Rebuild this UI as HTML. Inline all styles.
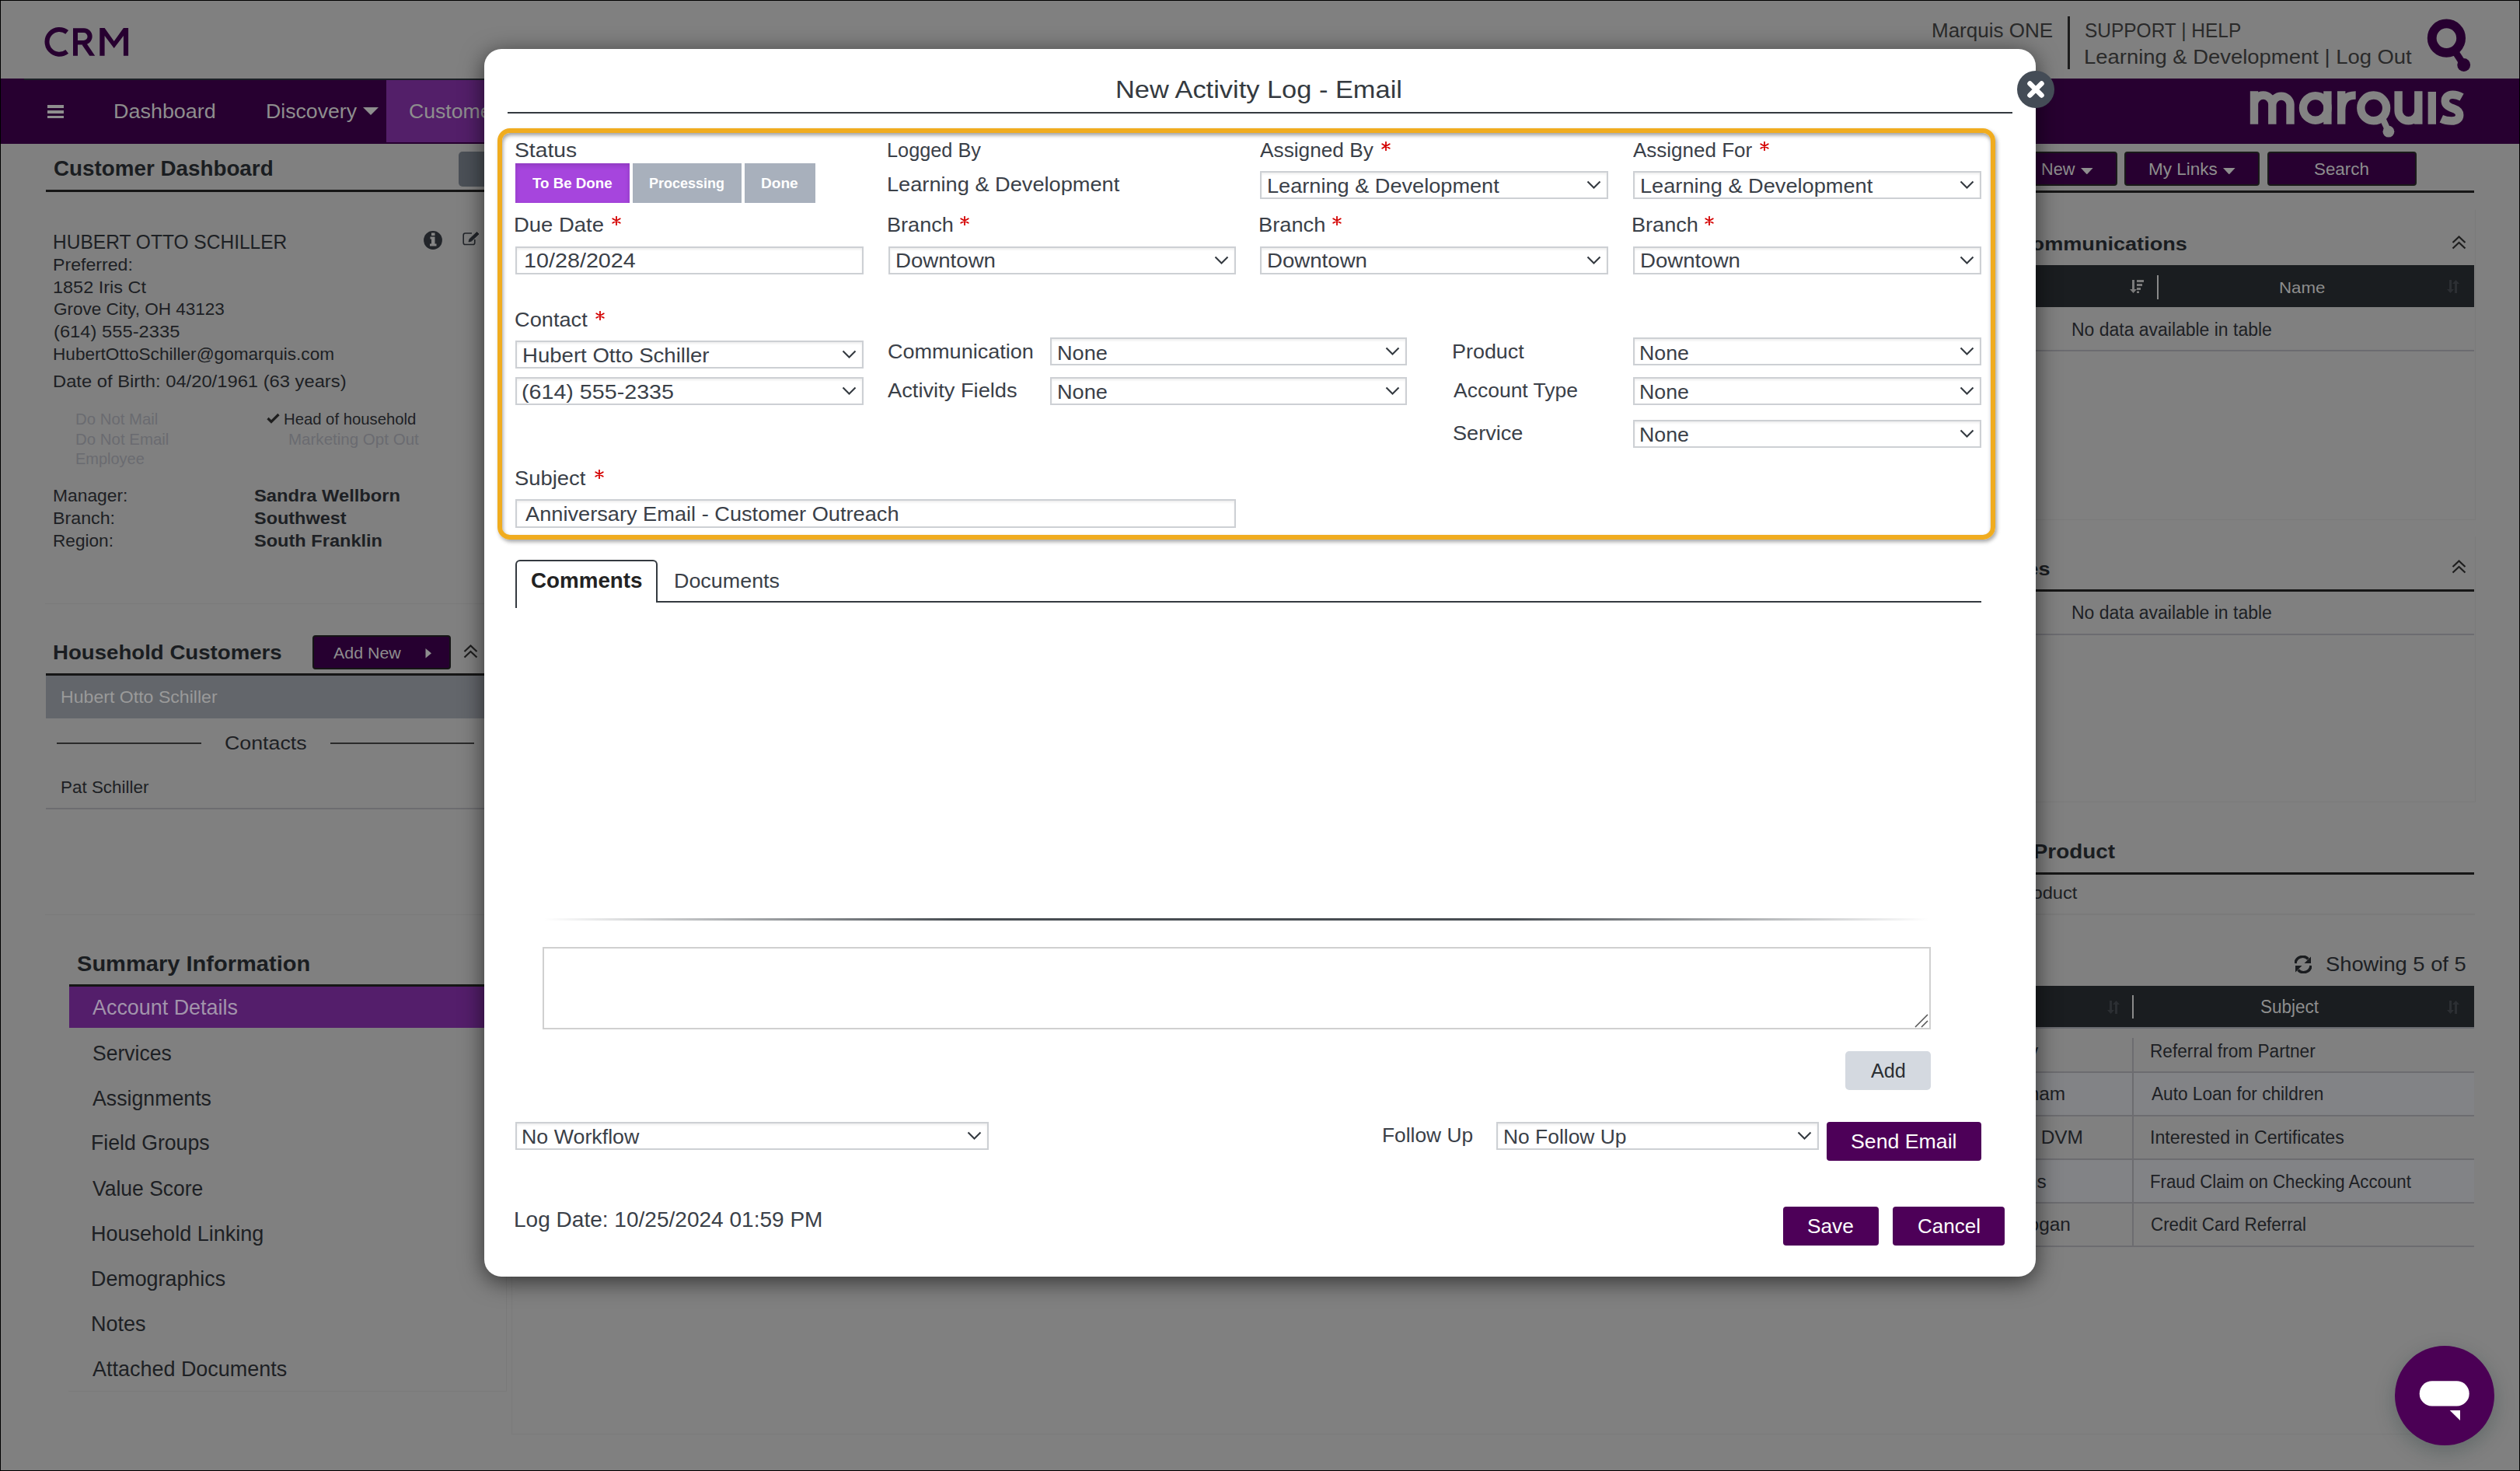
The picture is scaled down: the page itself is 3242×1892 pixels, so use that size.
<!DOCTYPE html>
<html><head><meta charset="utf-8"><style>
html,body{margin:0;padding:0;width:3242px;height:1892px;overflow:hidden;background:#808080;font-family:"Liberation Sans",sans-serif}
.t{position:absolute;white-space:nowrap;line-height:1;transform-origin:0 0}
#frame{position:absolute;left:0;top:0;width:3242px;height:1892px;box-sizing:border-box;border:1px solid #000;z-index:100;pointer-events:none}
</style></head><body>
<div style="position:absolute;left:0px;top:0px;width:3242px;height:101px;background:#808080"></div>
<div style="position:absolute;left:0px;top:101px;width:3242px;height:84px;background:#270030"></div>
<div style="position:absolute;left:31px;top:101px;width:2589px;height:2px;background:#1c2126"></div>
<div style="position:absolute;left:497px;top:103px;width:203px;height:80px;background:#531f69"></div>
<div style="position:absolute;left:61px;top:135px;width:21px;height:3.5px;background:#8e8e8e"></div>
<div style="position:absolute;left:61px;top:142px;width:21px;height:3.5px;background:#8e8e8e"></div>
<div style="position:absolute;left:61px;top:148.5px;width:21px;height:3.5px;background:#8e8e8e"></div>
<div style="position:absolute;left:58px;top:185px;width:582px;height:591px;background:#808080;border-bottom:1px solid #7a7a7a"></div>
<div style="position:absolute;left:59px;top:244px;width:581px;height:3px;background:#161616"></div>
<div style="position:absolute;left:590px;top:195px;width:70px;height:45px;background:#4b5057;border-radius:5px"></div>
<div style="position:absolute;left:58px;top:790px;width:582px;height:386px;background:#808080;border-bottom:1px solid #7a7a7a"></div>
<div style="position:absolute;left:402px;top:817px;width:178px;height:44px;background:#260030;border:2px solid #151515;border-radius:4px;box-sizing:border-box"></div>
<div style="position:absolute;left:59px;top:866px;width:581px;height:3px;background:#161616"></div>
<div style="position:absolute;left:59px;top:869px;width:581px;height:55px;background:#63666b"></div>
<div style="position:absolute;left:73px;top:955px;width:186px;height:2px;background:#2a2a2a"></div>
<div style="position:absolute;left:425px;top:955px;width:185px;height:2px;background:#2a2a2a"></div>
<div style="position:absolute;left:59px;top:1039px;width:581px;height:2px;background:#6d6d70"></div>
<div style="position:absolute;left:88px;top:1195px;width:563px;height:594px;background:#808080;border-right:1px solid #7a7a7a;border-bottom:1px solid #7a7a7a"></div>
<div style="position:absolute;left:89px;top:1266px;width:551px;height:3px;background:#161616"></div>
<div style="position:absolute;left:89px;top:1269px;width:551px;height:53px;background:#541e6b"></div>
<div style="position:absolute;left:658px;top:1190px;width:2526px;height:654px;background:#808080;border-left:1px solid #7a7a7a;border-bottom:1px solid #7a7a7a"></div>
<div style="position:absolute;left:2600px;top:195px;width:124px;height:44px;background:#270030;border:2px solid #1a1a1a;border-radius:4px;box-sizing:border-box"></div>
<div style="position:absolute;left:2733px;top:195px;width:174px;height:44px;background:#270030;border:2px solid #1a1a1a;border-radius:4px;box-sizing:border-box"></div>
<div style="position:absolute;left:2917px;top:195px;width:192px;height:44px;background:#270030;border:2px solid #1a1a1a;border-radius:4px;box-sizing:border-box"></div>
<div style="position:absolute;left:2600px;top:245px;width:583px;height:3px;background:#161616"></div>
<div style="position:absolute;left:2600px;top:270px;width:584px;height:398px;background:#808080;border-bottom:1px solid #7a7a7a;border-right:1px solid #7a7a7a"></div>
<div style="position:absolute;left:2600px;top:341px;width:583px;height:54px;background:#1a1d20"></div>
<div style="position:absolute;left:2775px;top:354px;width:2px;height:31px;background:#8a8a8a"></div>
<div style="position:absolute;left:2600px;top:450px;width:583px;height:2px;background:#6c6c70"></div>
<div style="position:absolute;left:2600px;top:690px;width:584px;height:341px;background:#808080;border-bottom:1px solid #7a7a7a;border-right:1px solid #7a7a7a"></div>
<div style="position:absolute;left:2600px;top:758px;width:583px;height:3px;background:#161616"></div>
<div style="position:absolute;left:2600px;top:815px;width:583px;height:2px;background:#6c6c70"></div>
<div style="position:absolute;left:2600px;top:1122px;width:583px;height:3px;background:#161616"></div>
<div style="position:absolute;left:2600px;top:1175px;width:584px;height:2px;background:#7a7a7a"></div>
<div style="position:absolute;left:2600px;top:1268px;width:583px;height:53px;background:#1a1d20"></div>
<div style="position:absolute;left:2743px;top:1280px;width:2px;height:30px;background:#8a8a8a"></div>
<div style="position:absolute;left:2600px;top:1323px;width:583px;height:55px;background:#808080"></div>
<div style="position:absolute;left:2600px;top:1378px;width:583px;height:56px;background:#828386"></div>
<div style="position:absolute;left:2600px;top:1434px;width:583px;height:56px;background:#808080"></div>
<div style="position:absolute;left:2600px;top:1490px;width:583px;height:56px;background:#828386"></div>
<div style="position:absolute;left:2600px;top:1546px;width:583px;height:56px;background:#808080"></div>
<div style="position:absolute;left:2600px;top:1321px;width:583px;height:2px;background:#6a6b70"></div>
<div style="position:absolute;left:2600px;top:1378px;width:583px;height:2px;background:#6c6c70"></div>
<div style="position:absolute;left:2600px;top:1434px;width:583px;height:2px;background:#6c6c70"></div>
<div style="position:absolute;left:2600px;top:1490px;width:583px;height:2px;background:#6c6c70"></div>
<div style="position:absolute;left:2600px;top:1546px;width:583px;height:2px;background:#6c6c70"></div>
<div style="position:absolute;left:2600px;top:1602px;width:583px;height:2px;background:#6c6c70"></div>
<div style="position:absolute;left:2743px;top:1335px;width:2px;height:269px;background:#6c6c70"></div>
<div style="position:absolute;left:2660px;top:21px;width:3px;height:68px;background:#1c1c1c"></div>
<svg style="position:absolute;left:2880px;top:100px" width="300" height="90" viewBox="0 0 300 90" fill="none" stroke="#838383" stroke-width="10.4">
<path d="M20 59.8 V17.3 M20 34.2 A11.65 11.65 0 0 1 43.3 34.2 V59.8 M43.3 34.2 A11.65 11.65 0 0 1 66.5 34.2 V59.8"/>
<circle cx="98.8" cy="38.9" r="15.8"/><path d="M114.4 17.3 V59.8"/>
<path d="M132.2 59.8 V17.3 M132.2 42 Q132.2 22.5 150.7 22.5"/>
<circle cx="173.7" cy="38.9" r="16.4"/><path d="M185 52 L192.9 69.2" stroke-width="8"/><circle cx="192.9" cy="69.2" r="7.4" fill="#838383" stroke="none"/>
<path d="M205.6 17.3 V42.4 A12.85 12.85 0 0 0 231.3 42.4 M231.3 17.3 V59.8"/>
<path d="M248.8 18 V59.8"/>
<path d="M287.1 25 C282 22.2 279 21.8 275.5 21.8 C269 21.8 265.8 25.5 265.8 30 C265.8 35 270 37.5 276 39.5 C282 41.5 284.2 44 284.2 48 C284.2 53 280 55.5 274 55.5 C269 55.5 264.5 54.5 260.8 52.8" stroke-width="10.5"/>
</svg>
<svg style="position:absolute;left:3110px;top:15px" width="80" height="85" viewBox="0 0 80 85">
<circle cx="37.4" cy="34.1" r="18.7" fill="none" stroke="#270030" stroke-width="11.8"/><path d="M47 49 L59.7 68.5" stroke="#270030" stroke-width="9"/><circle cx="59.7" cy="68.5" r="8.4" fill="#270030"/></svg>
<svg style="position:absolute;left:40px;top:20px" width="140" height="60" viewBox="0 0 140 60">
<path d="M46.2 21.3 A15.9 15.9 0 1 0 46.2 46.3" fill="none" stroke="#270030" stroke-width="6"/>
<path fill-rule="evenodd" fill="#270030" d="M54 51.7 V16.2 H68 A10.65 10.65 0 0 1 68 37.5 H60 V51.7 Z M60 21.9 V32 H67.5 A5.05 5.05 0 0 0 67.5 21.9 Z"/>
<path fill="#270030" d="M65.4 37.5 L71.5 36 L82.2 51.7 L75.2 51.7 Z"/>
<path fill="#270030" d="M88.3 51.7 L88.3 15.9 L94.6 15.9 L106.7 33 L118.9 15.9 L125.1 15.9 L125.1 51.7 L118.9 51.7 L118.9 26 L106.7 42 L94.6 26 L94.6 51.7 Z"/></svg>
<svg style="position:absolute;left:545px;top:296.5px" width="24" height="24" viewBox="0 0 24 24"><circle cx="12" cy="12" r="11.9" fill="#22252a"/><rect x="10" y="2.5" width="4.5" height="3.5" fill="#858585"/><path d="M8.5 7.5 H14.5 V16.5 H16.5 V19.5 H8 V16.5 H10 V10.5 H8.5 Z" fill="#858585"/></svg>
<svg style="position:absolute;left:594px;top:297px" width="24" height="20" viewBox="0 0 24 20" fill="none" stroke="#22252a" stroke-width="1.6"><path d="M13 3 H4.5 Q2.2 3 2.2 5.3 V15.2 Q2.2 17.5 4.5 17.5 H14.5 Q16.8 17.5 16.8 15.2 V11"/><path d="M9 14 L10 10.5 L19.5 1.5 L22 4 L12.5 13 Z" fill="#22252a" stroke-width="1"/></svg>
<svg style="position:absolute;left:343px;top:531px" width="17" height="14" viewBox="0 0 17 14"><path d="M1.5 7 L6 11.5 L15.5 2" fill="none" stroke="#1e1e1e" stroke-width="3.2"/></svg>
<svg style="position:absolute;left:547px;top:834px" width="9" height="13" viewBox="0 0 9 13"><path d="M0.5 0 L8 6.3 L0.5 12.5 Z" fill="#8e8e8e"/></svg>
<svg style="position:absolute;left:596px;top:829px" width="19" height="18" viewBox="0 0 19 18" fill="none" stroke="#1e1e1e" stroke-width="2.2"><path d="M1.5 9 L9.5 1.5 L17.5 9 M1.5 16.5 L9.5 9 L17.5 16.5"/></svg>
<svg style="position:absolute;left:3153.5px;top:303px" width="19" height="18" viewBox="0 0 19 18" fill="none" stroke="#1e1e1e" stroke-width="2.2"><path d="M1.5 9 L9.5 1.5 L17.5 9 M1.5 16.5 L9.5 9 L17.5 16.5"/></svg>
<svg style="position:absolute;left:3153.5px;top:720px" width="19" height="18" viewBox="0 0 19 18" fill="none" stroke="#1e1e1e" stroke-width="2.2"><path d="M1.5 9 L9.5 1.5 L17.5 9 M1.5 16.5 L9.5 9 L17.5 16.5"/></svg>
<svg style="position:absolute;left:467px;top:138px" width="20" height="10" viewBox="0 0 20 10"><path d="M0 0 L20 0 L10.0 10 Z" fill="#8e8e8e"/></svg>
<svg style="position:absolute;left:2677px;top:215.6px" width="15.6" height="8.4" viewBox="0 0 15.6 8.4"><path d="M0 0 L15.6 0 L7.8 8.4 Z" fill="#8e8e8e"/></svg>
<svg style="position:absolute;left:2860px;top:215.6px" width="15.6" height="8.4" viewBox="0 0 15.6 8.4"><path d="M0 0 L15.6 0 L7.8 8.4 Z" fill="#8e8e8e"/></svg>
<svg style="position:absolute;left:2740px;top:360px" width="19" height="18" viewBox="0 0 19 18" fill="#7a7a7a"><path d="M3 0 H6 V12 H9 L4.5 17 L0 12 H3 Z"/><rect x="9" y="0" width="9" height="3"/><rect x="9" y="5" width="7" height="3"/><rect x="9" y="10" width="5" height="3"/><rect x="9" y="14.5" width="3" height="2.5"/></svg>
<svg style="position:absolute;left:3147.5px;top:360px" width="16" height="18" viewBox="0 0 16 18" fill="#2c2f33"><path d="M3 0 H6 V12 H9 L4.5 17 L0 12 H3 Z"/><path d="M10 17 H13 V5 H16 L11.5 0 L7 5 H10 Z"/></svg>
<svg style="position:absolute;left:2710.5px;top:1287px" width="16" height="18" viewBox="0 0 16 18" fill="#2c2f33"><path d="M3 0 H6 V12 H9 L4.5 17 L0 12 H3 Z"/><path d="M10 17 H13 V5 H16 L11.5 0 L7 5 H10 Z"/></svg>
<svg style="position:absolute;left:3147.5px;top:1287px" width="16" height="18" viewBox="0 0 16 18" fill="#2c2f33"><path d="M3 0 H6 V12 H9 L4.5 17 L0 12 H3 Z"/><path d="M10 17 H13 V5 H16 L11.5 0 L7 5 H10 Z"/></svg>
<svg style="position:absolute;left:2952px;top:1229px" width="22" height="23" viewBox="0 0 22 23" fill="#1a1c1f"><path d="M1 10 A9.5 9.5 0 0 1 17.5 4.5" fill="none" stroke="#1a1c1f" stroke-width="3.4"/><path d="M21 1.5 V10 H12.5 Z"/><path d="M21 13 A9.5 9.5 0 0 1 4.5 18.5" fill="none" stroke="#1a1c1f" stroke-width="3.4"/><path d="M1 21.5 V13 H9.5 Z"/></svg>
<div class="t" style="left:145.9px;top:130.9px;font-size:25.35px;color:#8e8e8e;font-weight:normal;transform:scaleX(1.063);">Dashboard</div>
<div class="t" style="left:341.9px;top:130.9px;font-size:25.35px;color:#8e8e8e;font-weight:normal;transform:scaleX(1.052);">Discovery</div>
<div class="t" style="left:525.7px;top:130.9px;font-size:25.35px;color:#8e8e8e;font-weight:normal;transform:scaleX(1.050);">Customer</div>
<div class="t" style="left:69.1px;top:203.7px;font-size:26.76px;color:#1a1d21;font-weight:bold;transform:scaleX(1.039);">Customer Dashboard</div>
<div class="t" style="left:68.1px;top:297.6px;font-size:26.34px;color:#1d2024;font-weight:normal;transform:scaleX(0.932);">HUBERT OTTO SCHILLER</div>
<div class="t" style="left:68.2px;top:330.3px;font-size:22.54px;color:#1d2024;font-weight:normal;transform:scaleX(1.027);">Preferred:</div>
<div class="t" style="left:68.2px;top:359.3px;font-size:22.54px;color:#1d2024;font-weight:normal;transform:scaleX(1.041);">1852 Iris Ct</div>
<div class="t" style="left:68.9px;top:387.3px;font-size:22.54px;color:#1d2024;font-weight:normal;transform:scaleX(1.000);">Grove City, OH 43123</div>
<div class="t" style="left:68.6px;top:416.3px;font-size:22.54px;color:#1d2024;font-weight:normal;transform:scaleX(1.054);">(614) 555-2335</div>
<div class="t" style="left:68.2px;top:445.3px;font-size:22.54px;color:#1d2024;font-weight:normal;transform:scaleX(1.003);">HubertOttoSchiller@gomarquis.com</div>
<div class="t" style="left:68.1px;top:480.3px;font-size:22.54px;color:#1d2024;font-weight:normal;transform:scaleX(1.054);">Date of Birth: 04/20/1961 (63 years)</div>
<div class="t" style="left:97.0px;top:528.4px;font-size:21.13px;color:#6a6b70;font-weight:normal;transform:scaleX(0.964);">Do Not Mail</div>
<div class="t" style="left:97.0px;top:553.9px;font-size:21.13px;color:#6a6b70;font-weight:normal;transform:scaleX(0.967);">Do Not Email</div>
<div class="t" style="left:97.0px;top:579.4px;font-size:21.13px;color:#6a6b70;font-weight:normal;transform:scaleX(0.945);">Employee</div>
<div class="t" style="left:365.1px;top:528.4px;font-size:21.13px;color:#1d2024;font-weight:normal;transform:scaleX(0.960);">Head of household</div>
<div class="t" style="left:370.9px;top:553.9px;font-size:21.13px;color:#6a6b70;font-weight:normal;transform:scaleX(0.972);">Marketing Opt Out</div>
<div class="t" style="left:68.1px;top:627.3px;font-size:21.97px;color:#1d2024;font-weight:normal;transform:scaleX(1.039);">Manager:</div>
<div class="t" style="left:68.1px;top:655.7px;font-size:21.97px;color:#1d2024;font-weight:normal;transform:scaleX(1.057);">Branch:</div>
<div class="t" style="left:68.1px;top:684.5px;font-size:21.97px;color:#1d2024;font-weight:normal;transform:scaleX(1.029);">Region:</div>
<div class="t" style="left:327.4px;top:627.3px;font-size:21.97px;color:#1d2024;font-weight:bold;transform:scaleX(1.080);">Sandra Wellborn</div>
<div class="t" style="left:327.4px;top:655.7px;font-size:21.97px;color:#1d2024;font-weight:bold;transform:scaleX(1.067);">Southwest</div>
<div class="t" style="left:327.4px;top:684.5px;font-size:21.97px;color:#1d2024;font-weight:bold;transform:scaleX(1.073);">South Franklin</div>
<div class="t" style="left:68.3px;top:826.9px;font-size:25.35px;color:#1a1d21;font-weight:bold;transform:scaleX(1.090);">Household Customers</div>
<div class="t" style="left:429.0px;top:829.5px;font-size:20.70px;color:#8e8e8e;font-weight:normal;transform:scaleX(1.034);">Add New</div>
<div class="t" style="left:77.7px;top:886.4px;font-size:21.97px;color:#9a9a9a;font-weight:normal;transform:scaleX(1.052);">Hubert Otto Schiller</div>
<div class="t" style="left:289.3px;top:943.5px;font-size:24.65px;color:#1d2024;font-weight:normal;transform:scaleX(1.086);">Contacts</div>
<div class="t" style="left:77.9px;top:1001.8px;font-size:21.83px;color:#1d2024;font-weight:normal;transform:scaleX(1.027);">Pat Schiller</div>
<div class="t" style="left:98.5px;top:1227.2px;font-size:26.76px;color:#1a1d21;font-weight:bold;transform:scaleX(1.086);">Summary Information</div>
<div class="t" style="left:119.3px;top:1282.1px;font-size:27.46px;color:#a294ab;font-weight:normal;transform:scaleX(0.980);">Account Details</div>
<div class="t" style="left:118.5px;top:1341.1px;font-size:27.46px;color:#1d2024;font-weight:normal;transform:scaleX(0.967);">Services</div>
<div class="t" style="left:119.3px;top:1399.1px;font-size:27.46px;color:#1d2024;font-weight:normal;transform:scaleX(0.973);">Assignments</div>
<div class="t" style="left:117.2px;top:1456.1px;font-size:27.46px;color:#1d2024;font-weight:normal;transform:scaleX(0.971);">Field Groups</div>
<div class="t" style="left:119.3px;top:1515.1px;font-size:27.46px;color:#1d2024;font-weight:normal;transform:scaleX(0.965);">Value Score</div>
<div class="t" style="left:117.2px;top:1573.1px;font-size:27.46px;color:#1d2024;font-weight:normal;transform:scaleX(0.984);">Household Linking</div>
<div class="t" style="left:117.2px;top:1631.1px;font-size:27.46px;color:#1d2024;font-weight:normal;transform:scaleX(0.978);">Demographics</div>
<div class="t" style="left:117.2px;top:1688.7px;font-size:27.46px;color:#1d2024;font-weight:normal;transform:scaleX(0.985);">Notes</div>
<div class="t" style="left:119.3px;top:1747.1px;font-size:27.46px;color:#1d2024;font-weight:normal;transform:scaleX(0.982);">Attached Documents</div>
<div class="t" style="left:2484.6px;top:25.8px;font-size:26.20px;color:#2a2a2a;font-weight:normal;transform:scaleX(0.993);">Marquis ONE</div>
<div class="t" style="left:2682.2px;top:25.8px;font-size:26.20px;color:#2a2a2a;font-weight:normal;transform:scaleX(0.934);">SUPPORT | HELP</div>
<div class="t" style="left:2680.9px;top:60.2px;font-size:26.20px;color:#2a2a2a;font-weight:normal;transform:scaleX(1.047);">Learning &amp; Development | Log Out</div>
<div class="t" style="left:2626.3px;top:207.4px;font-size:21.69px;color:#8e8e8e;font-weight:normal;transform:scaleX(0.999);">New</div>
<div class="t" style="left:2763.9px;top:207.4px;font-size:21.69px;color:#8e8e8e;font-weight:normal;transform:scaleX(1.038);">My Links</div>
<div class="t" style="left:2977.1px;top:207.4px;font-size:21.69px;color:#8e8e8e;font-weight:normal;transform:scaleX(1.031);">Search</div>
<div class="t" style="left:2594.2px;top:301.5px;font-size:24.65px;color:#1a1d21;font-weight:bold;transform:scaleX(1.100);">Communications</div>
<div class="t" style="left:2932.2px;top:359.4px;font-size:21.13px;color:#8e8e8e;font-weight:normal;transform:scaleX(1.054);">Name</div>
<div class="t" style="left:2664.7px;top:412.8px;font-size:23.10px;color:#1d2024;font-weight:normal;transform:scaleX(0.994);">No data available in table</div>
<div class="t" style="left:2517.2px;top:719.5px;font-size:24.65px;color:#1a1d21;font-weight:bold;transform:scaleX(1.100);">Activities</div>
<div class="t" style="left:2664.7px;top:776.8px;font-size:23.10px;color:#1d2024;font-weight:normal;transform:scaleX(0.994);">No data available in table</div>
<div class="t" style="left:2463.5px;top:1083.3px;font-size:25.35px;color:#1a1d21;font-weight:bold;transform:scaleX(1.100);">Household Product</div>
<div class="t" style="left:2553.8px;top:1138.3px;font-size:22.54px;color:#1d2024;font-weight:normal;transform:scaleX(1.050);">No Product</div>
<div class="t" style="left:2991.8px;top:1227.4px;font-size:26.48px;color:#1d2024;font-weight:normal;transform:scaleX(1.032);">Showing 5 of 5</div>
<div class="t" style="left:2908.0px;top:1284.2px;font-size:23.24px;color:#8e8e8e;font-weight:normal;transform:scaleX(0.969);">Subject</div>
<div class="t" style="left:2766.1px;top:1340.7px;font-size:23.24px;color:#1d2024;font-weight:normal;transform:scaleX(0.975);">Referral from Partner</div>
<div class="t" style="left:2768.0px;top:1396.1px;font-size:23.24px;color:#1d2024;font-weight:normal;transform:scaleX(0.974);">Auto Loan for children</div>
<div class="t" style="left:2765.9px;top:1452.1px;font-size:23.24px;color:#1d2024;font-weight:normal;transform:scaleX(0.997);">Interested in Certificates</div>
<div class="t" style="left:2766.2px;top:1508.5px;font-size:23.24px;color:#1d2024;font-weight:normal;transform:scaleX(0.956);">Fraud Claim on Checking Account</div>
<div class="t" style="left:2766.9px;top:1563.7px;font-size:23.24px;color:#1d2024;font-weight:normal;transform:scaleX(0.962);">Credit Card Referral</div>
<div class="t" style="left:2552.8px;top:1340.7px;font-size:23.24px;color:#1d2024;font-weight:normal;transform:scaleX(1.050);">Sandy</div>
<div class="t" style="left:2569.4px;top:1396.1px;font-size:23.24px;color:#1d2024;font-weight:normal;transform:scaleX(1.050);">Graham</div>
<div class="t" style="left:2565.6px;top:1452.1px;font-size:23.24px;color:#1d2024;font-weight:normal;transform:scaleX(1.050);">Jane DVM</div>
<div class="t" style="left:2542.1px;top:1508.5px;font-size:23.24px;color:#1d2024;font-weight:normal;transform:scaleX(1.050);">Williams</div>
<div class="t" style="left:2592.2px;top:1563.7px;font-size:23.24px;color:#1d2024;font-weight:normal;transform:scaleX(1.050);">Hogan</div>
<div style="position:absolute;left:623px;top:63px;width:1996px;height:1579px;background:#fff;border-radius:22px;box-shadow:0 6px 30px rgba(0,0,0,.62)"></div>
<div style="position:absolute;left:653px;top:144px;width:1936px;height:2px;background:#343a40"></div>
<div style="position:absolute;left:640px;top:165px;width:1927px;height:529px;border:6px solid #f0ac1f;border-radius:16px;box-sizing:border-box;box-shadow:2px 3px 5px rgba(0,0,0,.35), inset 1px 3px 5px rgba(0,0,0,.38)"></div>
<div style="position:absolute;left:663px;top:210px;width:147px;height:51px;background:#a645dd;box-shadow:inset 0 3px 6px rgba(0,0,0,.14)"></div>
<div style="position:absolute;left:814px;top:210px;width:140px;height:51px;background:#a8b0bc"></div>
<div style="position:absolute;left:958px;top:210px;width:91px;height:51px;background:#a8b0bc"></div>
<div style="position:absolute;left:1621px;top:220px;width:448px;height:36px;border:2px solid #cdd0d4;box-sizing:border-box;background:#fff;box-shadow:inset 0 2px 3px rgba(0,0,0,.07)"></div>
<div style="position:absolute;left:2101px;top:220px;width:448px;height:36px;border:2px solid #cdd0d4;box-sizing:border-box;background:#fff;box-shadow:inset 0 2px 3px rgba(0,0,0,.07)"></div>
<div style="position:absolute;left:663px;top:317px;width:448px;height:36px;border:2px solid #cdd0d4;box-sizing:border-box;background:#fff;box-shadow:inset 0 2px 3px rgba(0,0,0,.07)"></div>
<div style="position:absolute;left:1143px;top:317px;width:447px;height:36px;border:2px solid #cdd0d4;box-sizing:border-box;background:#fff;box-shadow:inset 0 2px 3px rgba(0,0,0,.07)"></div>
<div style="position:absolute;left:1621px;top:317px;width:448px;height:36px;border:2px solid #cdd0d4;box-sizing:border-box;background:#fff;box-shadow:inset 0 2px 3px rgba(0,0,0,.07)"></div>
<div style="position:absolute;left:2101px;top:317px;width:448px;height:36px;border:2px solid #cdd0d4;box-sizing:border-box;background:#fff;box-shadow:inset 0 2px 3px rgba(0,0,0,.07)"></div>
<div style="position:absolute;left:663px;top:438px;width:448px;height:36px;border:2px solid #cdd0d4;box-sizing:border-box;background:#fff;box-shadow:inset 0 2px 3px rgba(0,0,0,.07)"></div>
<div style="position:absolute;left:663px;top:485px;width:448px;height:36px;border:2px solid #cdd0d4;box-sizing:border-box;background:#fff;box-shadow:inset 0 2px 3px rgba(0,0,0,.07)"></div>
<div style="position:absolute;left:1351px;top:434px;width:459px;height:36px;border:2px solid #cdd0d4;box-sizing:border-box;background:#fff;box-shadow:inset 0 2px 3px rgba(0,0,0,.07)"></div>
<div style="position:absolute;left:1351px;top:485px;width:459px;height:36px;border:2px solid #cdd0d4;box-sizing:border-box;background:#fff;box-shadow:inset 0 2px 3px rgba(0,0,0,.07)"></div>
<div style="position:absolute;left:2101px;top:434px;width:448px;height:36px;border:2px solid #cdd0d4;box-sizing:border-box;background:#fff;box-shadow:inset 0 2px 3px rgba(0,0,0,.07)"></div>
<div style="position:absolute;left:2101px;top:485px;width:448px;height:36px;border:2px solid #cdd0d4;box-sizing:border-box;background:#fff;box-shadow:inset 0 2px 3px rgba(0,0,0,.07)"></div>
<div style="position:absolute;left:2101px;top:540px;width:448px;height:36px;border:2px solid #cdd0d4;box-sizing:border-box;background:#fff;box-shadow:inset 0 2px 3px rgba(0,0,0,.07)"></div>
<div style="position:absolute;left:663px;top:642px;width:927px;height:37px;border:2px solid #cdd0d4;box-sizing:border-box;background:#fff;box-shadow:inset 0 2px 3px rgba(0,0,0,.07)"></div>
<div style="position:absolute;left:663px;top:773px;width:1886px;height:2px;background:#343a40"></div>
<div style="position:absolute;left:700px;top:1181px;width:1781px;height:3px;background:linear-gradient(90deg,rgba(52,58,64,0),rgba(52,58,64,.9) 30%,rgba(52,58,64,.9) 70%,rgba(52,58,64,0))"></div>
<div style="position:absolute;left:698px;top:1218px;width:1786px;height:106px;border:2px solid #d0d0d0;box-sizing:border-box;background:#fff"></div>
<div style="position:absolute;left:2374px;top:1352px;width:110px;height:50px;background:#d4d9e0;border-radius:5px"></div>
<div style="position:absolute;left:663px;top:1443px;width:609px;height:36px;border:2px solid #cdd0d4;box-sizing:border-box;background:#fff;box-shadow:inset 0 2px 3px rgba(0,0,0,.07)"></div>
<div style="position:absolute;left:1925px;top:1443px;width:415px;height:36px;border:2px solid #cdd0d4;box-sizing:border-box;background:#fff;box-shadow:inset 0 2px 3px rgba(0,0,0,.07)"></div>
<div style="position:absolute;left:2350px;top:1443px;width:199px;height:50px;background:#4d0058;border-radius:4px"></div>
<div style="position:absolute;left:2294px;top:1552px;width:123px;height:50px;background:#4d0058;border-radius:4px"></div>
<div style="position:absolute;left:2435px;top:1552px;width:144px;height:50px;background:#4d0058;border-radius:4px"></div>
<svg style="position:absolute;left:1776.5px;top:182.1px" width="12" height="12" viewBox="0 0 12 12"><path d="M6 0.6 V11.4 M1.25 3.25 L10.75 8.75 M1.25 8.75 L10.75 3.25" stroke="#d40000" stroke-width="1.8" stroke-linecap="round"/></svg>
<svg style="position:absolute;left:2263.5px;top:182.1px" width="12" height="12" viewBox="0 0 12 12"><path d="M6 0.6 V11.4 M1.25 3.25 L10.75 8.75 M1.25 8.75 L10.75 3.25" stroke="#d40000" stroke-width="1.8" stroke-linecap="round"/></svg>
<svg style="position:absolute;left:2041px;top:232.0px" width="19" height="12" viewBox="0 0 19 12"><path d="M1.5 1.5 L9.5 9.5 L17.5 1.5" fill="none" stroke="#343a40" stroke-width="2.1"/></svg>
<svg style="position:absolute;left:2521px;top:232.0px" width="19" height="12" viewBox="0 0 19 12"><path d="M1.5 1.5 L9.5 9.5 L17.5 1.5" fill="none" stroke="#343a40" stroke-width="2.1"/></svg>
<svg style="position:absolute;left:786.5px;top:277.5px" width="12" height="12" viewBox="0 0 12 12"><path d="M6 0.6 V11.4 M1.25 3.25 L10.75 8.75 M1.25 8.75 L10.75 3.25" stroke="#d40000" stroke-width="1.8" stroke-linecap="round"/></svg>
<svg style="position:absolute;left:1235.0px;top:277.5px" width="12" height="12" viewBox="0 0 12 12"><path d="M6 0.6 V11.4 M1.25 3.25 L10.75 8.75 M1.25 8.75 L10.75 3.25" stroke="#d40000" stroke-width="1.8" stroke-linecap="round"/></svg>
<svg style="position:absolute;left:1713.5px;top:277.5px" width="12" height="12" viewBox="0 0 12 12"><path d="M6 0.6 V11.4 M1.25 3.25 L10.75 8.75 M1.25 8.75 L10.75 3.25" stroke="#d40000" stroke-width="1.8" stroke-linecap="round"/></svg>
<svg style="position:absolute;left:2192.5px;top:277.5px" width="12" height="12" viewBox="0 0 12 12"><path d="M6 0.6 V11.4 M1.25 3.25 L10.75 8.75 M1.25 8.75 L10.75 3.25" stroke="#d40000" stroke-width="1.8" stroke-linecap="round"/></svg>
<svg style="position:absolute;left:1562px;top:329.0px" width="19" height="12" viewBox="0 0 19 12"><path d="M1.5 1.5 L9.5 9.5 L17.5 1.5" fill="none" stroke="#343a40" stroke-width="2.1"/></svg>
<svg style="position:absolute;left:2041px;top:329.0px" width="19" height="12" viewBox="0 0 19 12"><path d="M1.5 1.5 L9.5 9.5 L17.5 1.5" fill="none" stroke="#343a40" stroke-width="2.1"/></svg>
<svg style="position:absolute;left:2521px;top:329.0px" width="19" height="12" viewBox="0 0 19 12"><path d="M1.5 1.5 L9.5 9.5 L17.5 1.5" fill="none" stroke="#343a40" stroke-width="2.1"/></svg>
<svg style="position:absolute;left:765.5px;top:400.1px" width="12" height="12" viewBox="0 0 12 12"><path d="M6 0.6 V11.4 M1.25 3.25 L10.75 8.75 M1.25 8.75 L10.75 3.25" stroke="#d40000" stroke-width="1.8" stroke-linecap="round"/></svg>
<svg style="position:absolute;left:1083px;top:450.0px" width="19" height="12" viewBox="0 0 19 12"><path d="M1.5 1.5 L9.5 9.5 L17.5 1.5" fill="none" stroke="#343a40" stroke-width="2.1"/></svg>
<svg style="position:absolute;left:1083px;top:497.0px" width="19" height="12" viewBox="0 0 19 12"><path d="M1.5 1.5 L9.5 9.5 L17.5 1.5" fill="none" stroke="#343a40" stroke-width="2.1"/></svg>
<svg style="position:absolute;left:1782px;top:446.0px" width="19" height="12" viewBox="0 0 19 12"><path d="M1.5 1.5 L9.5 9.5 L17.5 1.5" fill="none" stroke="#343a40" stroke-width="2.1"/></svg>
<svg style="position:absolute;left:1782px;top:497.0px" width="19" height="12" viewBox="0 0 19 12"><path d="M1.5 1.5 L9.5 9.5 L17.5 1.5" fill="none" stroke="#343a40" stroke-width="2.1"/></svg>
<svg style="position:absolute;left:2521px;top:446.0px" width="19" height="12" viewBox="0 0 19 12"><path d="M1.5 1.5 L9.5 9.5 L17.5 1.5" fill="none" stroke="#343a40" stroke-width="2.1"/></svg>
<svg style="position:absolute;left:2521px;top:497.0px" width="19" height="12" viewBox="0 0 19 12"><path d="M1.5 1.5 L9.5 9.5 L17.5 1.5" fill="none" stroke="#343a40" stroke-width="2.1"/></svg>
<svg style="position:absolute;left:2521px;top:552.0px" width="19" height="12" viewBox="0 0 19 12"><path d="M1.5 1.5 L9.5 9.5 L17.5 1.5" fill="none" stroke="#343a40" stroke-width="2.1"/></svg>
<svg style="position:absolute;left:764.5px;top:604.1px" width="12" height="12" viewBox="0 0 12 12"><path d="M6 0.6 V11.4 M1.25 3.25 L10.75 8.75 M1.25 8.75 L10.75 3.25" stroke="#d40000" stroke-width="1.8" stroke-linecap="round"/></svg>
<div style="position:absolute;left:663px;top:720px;width:183px;height:55px;border:2px solid #343a40;border-bottom:none;border-radius:6px 6px 0 0;box-sizing:border-box;background:#fff"></div>
<svg style="position:absolute;left:2462px;top:1304px" width="20" height="18" viewBox="0 0 20 18"><path d="M2 17 L18 1 M10 17 L18 9" stroke="#555" stroke-width="1.6"/></svg>
<svg style="position:absolute;left:1244px;top:1455.0px" width="19" height="12" viewBox="0 0 19 12"><path d="M1.5 1.5 L9.5 9.5 L17.5 1.5" fill="none" stroke="#343a40" stroke-width="2.1"/></svg>
<svg style="position:absolute;left:2312px;top:1455.0px" width="19" height="12" viewBox="0 0 19 12"><path d="M1.5 1.5 L9.5 9.5 L17.5 1.5" fill="none" stroke="#343a40" stroke-width="2.1"/></svg>
<div class="t" style="left:1435.3px;top:99.8px;font-size:31.97px;color:#343a40;font-weight:normal;transform:scaleX(1.076);">New Activity Log - Email</div>
<div class="t" style="left:661.8px;top:181.3px;font-size:24.93px;color:#3a4048;font-weight:normal;transform:scaleX(1.135);">Status</div>
<div class="t" style="left:684.8px;top:226.8px;font-size:18.59px;color:#fff;font-weight:bold;transform:scaleX(1.008);">To Be Done</div>
<div class="t" style="left:834.8px;top:226.8px;font-size:18.59px;color:#fff;font-weight:bold;transform:scaleX(0.968);">Processing</div>
<div class="t" style="left:978.8px;top:226.8px;font-size:18.59px;color:#fff;font-weight:bold;transform:scaleX(1.028);">Done</div>
<div class="t" style="left:1141.0px;top:181.3px;font-size:24.93px;color:#3a4048;font-weight:normal;transform:scaleX(1.015);">Logged By</div>
<div class="t" style="left:1140.8px;top:224.7px;font-size:24.93px;color:#3a4048;font-weight:normal;transform:scaleX(1.091);">Learning &amp; Development</div>
<div class="t" style="left:1621.0px;top:181.3px;font-size:24.93px;color:#3a4048;font-weight:normal;transform:scaleX(1.053);">Assigned By</div>
<div class="t" style="left:2101.0px;top:181.3px;font-size:24.93px;color:#3a4048;font-weight:normal;transform:scaleX(1.043);">Assigned For</div>
<div class="t" style="left:1629.8px;top:227.3px;font-size:24.93px;color:#3a4048;font-weight:normal;transform:scaleX(1.089);">Learning &amp; Development</div>
<div class="t" style="left:2109.8px;top:227.3px;font-size:24.93px;color:#3a4048;font-weight:normal;transform:scaleX(1.091);">Learning &amp; Development</div>
<div class="t" style="left:660.8px;top:276.7px;font-size:24.93px;color:#3a4048;font-weight:normal;transform:scaleX(1.102);">Due Date</div>
<div class="t" style="left:1140.8px;top:276.7px;font-size:24.93px;color:#3a4048;font-weight:normal;transform:scaleX(1.087);">Branch</div>
<div class="t" style="left:1618.8px;top:276.7px;font-size:24.93px;color:#3a4048;font-weight:normal;transform:scaleX(1.094);">Branch</div>
<div class="t" style="left:2098.8px;top:276.7px;font-size:24.93px;color:#3a4048;font-weight:normal;transform:scaleX(1.087);">Branch</div>
<div class="t" style="left:674.4px;top:323.3px;font-size:24.93px;color:#3a4048;font-weight:normal;transform:scaleX(1.153);">10/28/2024</div>
<div class="t" style="left:1151.8px;top:323.3px;font-size:24.93px;color:#3a4048;font-weight:normal;transform:scaleX(1.108);">Downtown</div>
<div class="t" style="left:1629.8px;top:323.3px;font-size:24.93px;color:#3a4048;font-weight:normal;transform:scaleX(1.108);">Downtown</div>
<div class="t" style="left:2109.8px;top:323.3px;font-size:24.93px;color:#3a4048;font-weight:normal;transform:scaleX(1.108);">Downtown</div>
<div class="t" style="left:661.7px;top:399.3px;font-size:24.93px;color:#3a4048;font-weight:normal;transform:scaleX(1.091);">Contact</div>
<div class="t" style="left:671.8px;top:444.9px;font-size:24.93px;color:#3a4048;font-weight:normal;transform:scaleX(1.106);">Hubert Otto Schiller</div>
<div class="t" style="left:671.1px;top:492.3px;font-size:24.93px;color:#3a4048;font-weight:normal;transform:scaleX(1.150);">(614) 555-2335</div>
<div class="t" style="left:1141.7px;top:439.8px;font-size:24.93px;color:#3a4048;font-weight:normal;transform:scaleX(1.085);">Communication</div>
<div class="t" style="left:1142.0px;top:490.3px;font-size:24.93px;color:#3a4048;font-weight:normal;transform:scaleX(1.094);">Activity Fields</div>
<div class="t" style="left:1359.8px;top:441.8px;font-size:24.93px;color:#3a4048;font-weight:normal;transform:scaleX(1.090);">None</div>
<div class="t" style="left:1359.8px;top:492.3px;font-size:24.93px;color:#3a4048;font-weight:normal;transform:scaleX(1.090);">None</div>
<div class="t" style="left:1867.8px;top:439.8px;font-size:24.93px;color:#3a4048;font-weight:normal;transform:scaleX(1.080);">Product</div>
<div class="t" style="left:1870.0px;top:490.3px;font-size:24.93px;color:#3a4048;font-weight:normal;transform:scaleX(1.063);">Account Type</div>
<div class="t" style="left:1868.8px;top:545.0px;font-size:24.93px;color:#3a4048;font-weight:normal;transform:scaleX(1.087);">Service</div>
<div class="t" style="left:2108.9px;top:441.8px;font-size:24.93px;color:#3a4048;font-weight:normal;transform:scaleX(1.072);">None</div>
<div class="t" style="left:2108.9px;top:492.3px;font-size:24.93px;color:#3a4048;font-weight:normal;transform:scaleX(1.072);">None</div>
<div class="t" style="left:2108.9px;top:547.0px;font-size:24.93px;color:#3a4048;font-weight:normal;transform:scaleX(1.072);">None</div>
<div class="t" style="left:661.8px;top:603.3px;font-size:24.93px;color:#3a4048;font-weight:normal;transform:scaleX(1.099);">Subject</div>
<div class="t" style="left:675.5px;top:649.3px;font-size:24.93px;color:#3a4048;font-weight:normal;transform:scaleX(1.091);">Anniversary Email - Customer Outreach</div>
<div class="t" style="left:866.9px;top:734.9px;font-size:25.35px;color:#3a4048;font-weight:normal;transform:scaleX(1.061);">Documents</div>
<div class="t" style="left:2407.0px;top:1363.8px;font-size:26.34px;color:#2b2f33;font-weight:normal;transform:scaleX(0.958);">Add</div>
<div class="t" style="left:671.4px;top:1450.3px;font-size:24.93px;color:#3a4048;font-weight:normal;transform:scaleX(1.075);">No Workflow</div>
<div class="t" style="left:1777.9px;top:1447.9px;font-size:25.35px;color:#3a4048;font-weight:normal;transform:scaleX(1.039);">Follow Up</div>
<div class="t" style="left:1933.9px;top:1450.3px;font-size:24.93px;color:#3a4048;font-weight:normal;transform:scaleX(1.060);">No Follow Up</div>
<div class="t" style="left:2381.2px;top:1455.1px;font-size:26.34px;color:#fff;font-weight:500;transform:scaleX(1.014);">Send Email</div>
<div class="t" style="left:660.8px;top:1555.7px;font-size:26.76px;color:#3a4048;font-weight:normal;transform:scaleX(1.048);">Log Date: 10/25/2024 01:59 PM</div>
<div class="t" style="left:2325.2px;top:1564.3px;font-size:26.06px;color:#fff;font-weight:500;transform:scaleX(1.008);">Save</div>
<div class="t" style="left:2466.8px;top:1564.3px;font-size:26.06px;color:#fff;font-weight:500;transform:scaleX(0.998);">Cancel</div>
<div style="position:absolute;left:665px;top:773px;width:179px;height:2px;background:#fff"></div>
<div style="position:absolute;left:663px;top:773px;width:2px;height:9px;background:#343a40"></div>
<svg style="position:absolute;left:2595px;top:91px" width="48" height="48" viewBox="0 0 48 48"><circle cx="24" cy="24" r="24" fill="#444c56"/><path d="M16.5 16.5 L31.5 31.5 M31.5 16.5 L16.5 31.5" stroke="#fff" stroke-width="6.5" stroke-linecap="round"/></svg>
<div class="t" style="left:682.6px;top:733.7px;font-size:26.76px;color:#222;font-weight:bold;transform:scaleX(1.038);">Comments</div>
<div style="position:absolute;left:3081px;top:1730.5px;width:128px;height:128px;border-radius:50%;background:#4b0055;box-shadow:0 8px 26px rgba(10,40,40,.26)"></div>
<svg style="position:absolute;left:3040px;top:1690px" width="202" height="202" viewBox="0 0 202 202"><rect x="72.7" y="86.3" width="64" height="32.2" rx="16.1" fill="#fff"/><path d="M111.7 124 L125 124 L125 137 Z" fill="#fff"/></svg>
<div id="frame"></div>
</body></html>
